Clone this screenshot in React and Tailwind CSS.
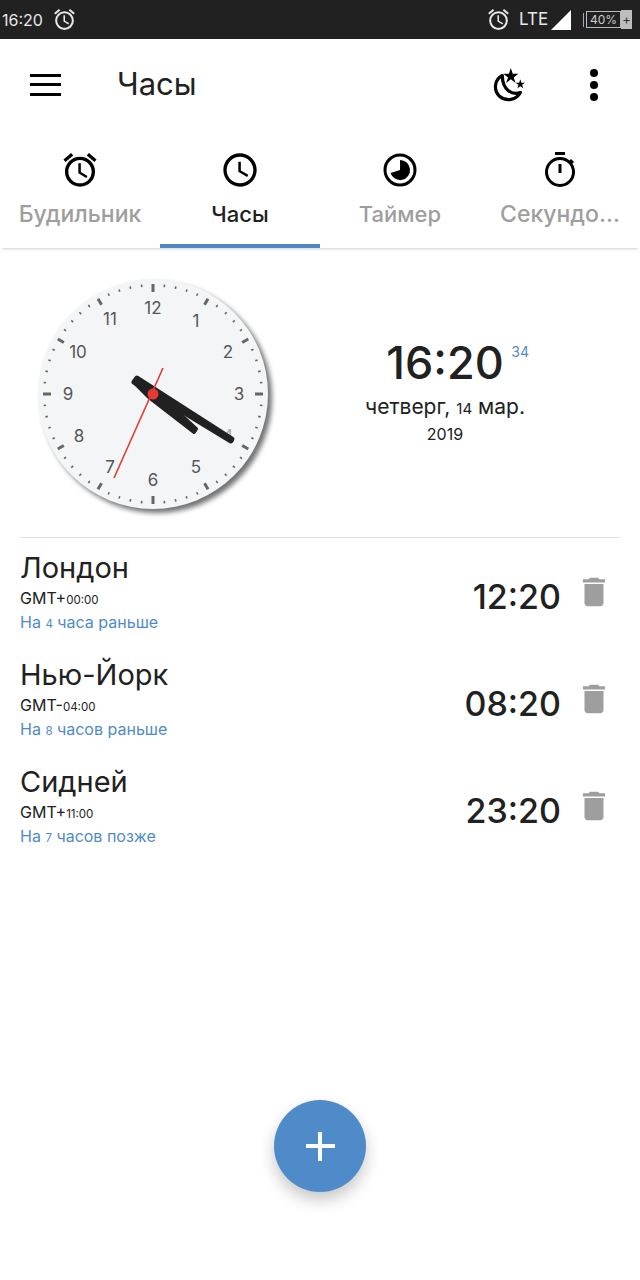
import { MdOutlineAlarm, MdOutlineAccessTime, MdDelete } from 'react-icons/md';

const Small = ({ children }) => <span className="text-[0.72em]">{children}</span>;

const NightIcon = () => (
    <svg width="34" height="36" viewBox="0 0 36 38">
        <path d="M12 9 C4 13 2 24 9 31 C16 37 27 35 31 27 C22 30 12 24 12 9 Z" fill="none" stroke="#000" strokeWidth="3.4" strokeLinejoin="round" />
        <polygon points="21,1 23,7 29,7 24,11 26,17 21,13 16,17 18,11 13,7 19,7" fill="#000" />
        <polygon points="31,13 32.2,16.5 36,16.5 33,18.8 34,22.5 31,20.2 28,22.5 29,18.8 26,16.5 29.8,16.5" fill="#000" />
    </svg>
);

const TimerTabIcon = () => (
    <svg width="34" height="34" viewBox="0 0 34 34">
        <circle cx="17" cy="17" r="15" fill="none" stroke="#000" strokeWidth="3" />
        <path d="M17 7 A10 10 0 1 1 7.5 20 L17 17 Z" fill="#000" />
    </svg>
);

const StopwatchIcon = () => (
    <svg width="34" height="38" viewBox="0 0 34 38">
        <rect x="12" y="1" width="10" height="3" fill="#000" />
        <circle cx="17" cy="21" r="13.5" fill="none" stroke="#000" strokeWidth="3" />
        <rect x="15.5" y="13" width="3" height="9" fill="#000" />
        <path d="M27 9 L30 12" stroke="#000" strokeWidth="3" />
    </svg>
);

const tabs = [
    { label: 'Будильник', size: 'text-[23px]', icon: <MdOutlineAlarm size={40} color="#000" /> },
    { label: 'Часы', size: 'text-[22px]', icon: <MdOutlineAccessTime size={40} color="#000" />, active: true },
    { label: 'Таймер', size: 'text-[22px]', icon: <TimerTabIcon /> },
    { label: 'Секундо…', size: 'text-[23px]', icon: <StopwatchIcon /> },
];

const cities = [
    { name: 'Лондон', gmt: 'GMT+', offset: '00:00', before: 'На ', num: '4', after: ' часа раньше', time: '12:20' },
    { name: 'Нью-Йорк', gmt: 'GMT-', offset: '04:00', before: 'На ', num: '8', after: ' часов раньше', time: '08:20' },
    { name: 'Сидней', gmt: 'GMT+', offset: '11:00', before: 'На ', num: '7', after: ' часов позже', time: '23:20' },
];

// numerals on the dial, relative to the 230 box
const numerals = [
    ['12', 115, 29], ['1', 158, 42], ['2', 190, 73], ['3', 201, 115], ['4', 190, 157], ['5', 158, 188],
    ['6', 115, 201], ['7', 72, 188], ['8', 41, 157], ['9', 30, 115], ['10', 40, 73], ['11', 72, 40],
];

const Dial = () => (
    <div className="w-[230px] h-[230px] rounded-full bg-[#f4f5f7] shadow-[4px_4px_5px_rgba(0,0,0,0.55)]">
        <svg width="230" height="230" viewBox="0 0 230 230">
            {Array.from({ length: 60 }, (_, i) => {
                const major = i % 5 === 0;
                const cardinal = i % 15 === 0;
                const len = cardinal ? 8 : major ? 7 : 2.5;
                return (
                    <rect
                        key={i}
                        x={major ? 113.5 : 114.2}
                        y={5}
                        width={major ? 3 : 1.6}
                        height={len}
                        fill="#666"
                        transform={`rotate(${i * 6} 115 115)`}
                    />
                );
            })}
            {numerals.map(([n, x, y]) => (
                <text key={n} x={x} y={y} textAnchor="middle" dominantBaseline="central" fontSize="17" fontFamily="Inter, sans-serif" fill={n === '4' ? '#aaa' : '#555'}>{n}</text>
            ))}
            <polygon points="96,103 99,99 118,113 158,150 156,153 112,119" fill="#212121" stroke="#212121" strokeWidth="4" strokeLinejoin="round" />
            <polygon points="96,103 99,99 194,160 193,162" fill="#212121" stroke="#212121" strokeWidth="5" strokeLinejoin="round" />
            <line x1="125" y1="89" x2="76" y2="199" stroke="#e53935" strokeWidth="1.6" />
            <circle cx="115" cy="115" r="5.5" fill="#e53935" />
        </svg>
    </div>
);

export default function App() {
    return (
        <div className="w-[640px] h-[1280px] bg-white flex flex-col font-['Inter',sans-serif] text-[#212121]">
            {/* status bar */}
            <div className="h-[39px] bg-[#212121] flex items-center text-[#e8e8e8] pl-[2px] pr-[8px]">
                <span className="text-[16px]">16:20</span>
                <MdOutlineAlarm size={25} className="ml-[9px]" />
                <div className="ml-auto flex items-center">
                    <MdOutlineAlarm size={25} className="mr-[2px]" />
                    <span className="ml-[6px] text-[17px] w-[28px]">LTE</span>
                    <svg width="22" height="22" viewBox="0 0 22 22" className="ml-[3px]">
                        <polygon points="21,1 21,21 1,21" fill="#fff" />
                    </svg>
                    <div className="ml-[11px] flex items-center">
                        <span className="w-[3px] h-[14px] border-l border-[#aaa]" />
                        <span className="w-[35px] h-[17px] border border-[#bbb] text-[12px] leading-[15px] text-center text-[#ccc]">40%</span>
                        <span className="w-[11px] h-[19px] bg-[#bdbdbd] text-[#333] text-[13px] leading-[18px] text-center">+</span>
                    </div>
                </div>
            </div>

            {/* toolbar */}
            <div className="h-[91px] flex items-center pl-[30px] pr-[42px]">
                <div className="w-[31px] flex flex-col gap-[6.5px]">
                    <span className="h-[3px] bg-black" />
                    <span className="h-[3px] bg-black" />
                    <span className="h-[3px] bg-black" />
                </div>
                <span className="ml-[56px] text-[31px]">Часы</span>
                <div className="ml-auto flex items-center gap-[65px]">
                    <NightIcon />
                    <div className="flex flex-col gap-[4px]">
                        <span className="w-[8px] h-[8px] rounded-full bg-black" />
                        <span className="w-[8px] h-[8px] rounded-full bg-black" />
                        <span className="w-[8px] h-[8px] rounded-full bg-black" />
                    </div>
                </div>
            </div>

            {/* tabs */}
            <div className="h-[118px] flex shadow-[0_3px_3px_-2px_rgba(0,0,0,0.18)] relative">
                {tabs.map((t) => (
                    <div key={t.label} className={`w-[160px] flex flex-col items-center border-b-4 ${t.active ? 'border-[#4f86c6]' : 'border-transparent'}`}>
                        <div className="h-[40px] mt-[20px] flex items-center justify-center">{t.icon}</div>
                        <span className={`mt-[9px] ${t.size} leading-[30px] whitespace-nowrap font-medium ${t.active ? 'text-[#212121]' : 'text-[#9e9e9e]'}`}>{t.label}</span>
                    </div>
                ))}
            </div>

            {/* main clock */}
            <div className="h-[289px] flex items-start pl-[38px] pt-[31px]">
                <Dial />
                <div className="flex-1 flex flex-col items-center pr-[18px] pt-[56px]">
                    <div className="relative">
                        <span className="text-[45px] leading-[56px] font-medium">16:20</span>
                        <span className="absolute left-[125px] top-[6px] text-[14px] text-[#4f8ac9]">34</span>
                    </div>
                    <span className="text-[21px] leading-[30px] mt-[1px]">четверг, <Small>14</Small> мар.</span>
                    <span className="text-[16px] leading-[20px]">2019</span>
                </div>
            </div>

            {/* world clocks */}
            <div className="mx-[20px] border-t border-[#e0e0e0]">
                {cities.map((c) => (
                    <div key={c.name} className="h-[107px] flex items-start">
                        <div className="flex flex-col pt-[11px]">
                            <span className="text-[29px] leading-[38px]">{c.name}</span>
                            <span className="text-[16px] leading-[20px] mt-[1px]">{c.gmt}<Small>{c.offset}</Small></span>
                            <span className="text-[16px] leading-[24px] text-[#4f8ac9]">{c.before}<Small>{c.num}</Small>{c.after}</span>
                        </div>
                        <span className="ml-auto mt-[34px] text-[34px] leading-[50px] font-medium">{c.time}</span>
                        <MdDelete size={38} color="#9e9e9e" className="ml-[14px] mr-[7px] mt-[35px]" />
                    </div>
                ))}
            </div>

            {/* add button */}
            <div className="mt-[241px] flex justify-center">
                <div className="w-[92px] h-[92px] rounded-full bg-[#4f8ac9] shadow-[0_8px_16px_rgba(0,0,0,0.22)] flex items-center justify-center relative">
                    <span className="absolute w-[29px] h-[3.5px] bg-white" />
                    <span className="absolute w-[3.5px] h-[29px] bg-white" />
                </div>
            </div>
        </div>
    );
}
